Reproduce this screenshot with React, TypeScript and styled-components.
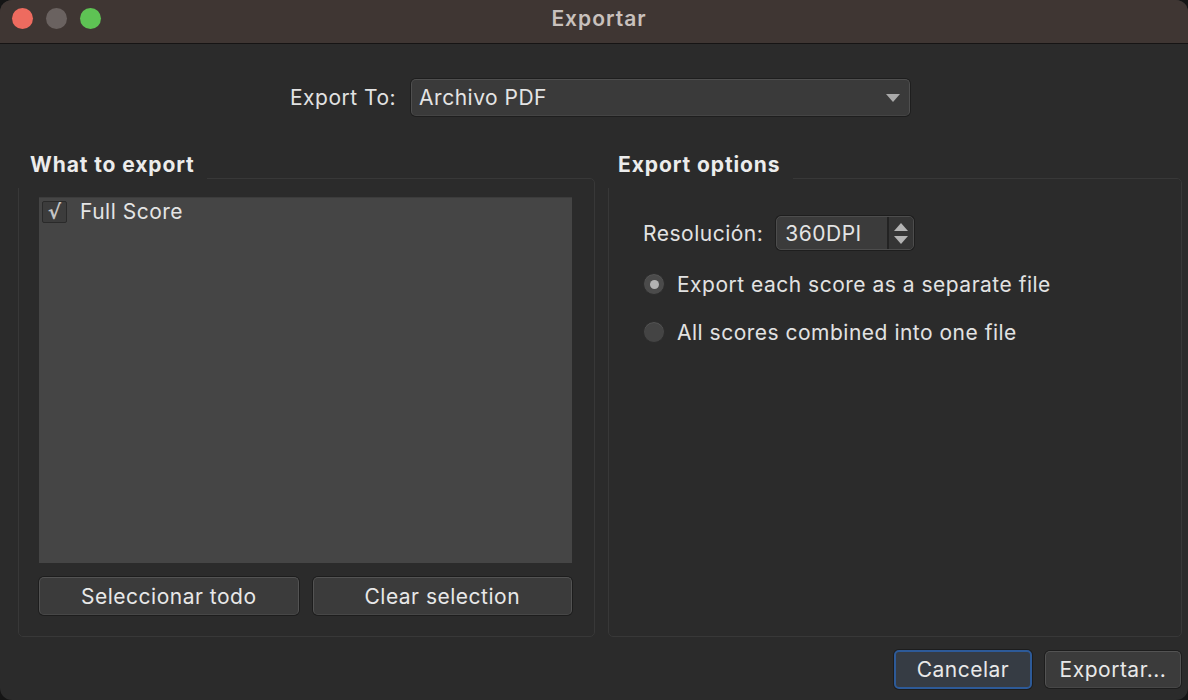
import styled, { createGlobalStyle } from "styled-components";

const GlobalStyle = createGlobalStyle`
  html, body {
    margin: 0;
    padding: 0;
    background: #151515;
  }
  body {
    font-family: Inter, "Noto Sans", "Liberation Sans", sans-serif;
    -webkit-font-smoothing: antialiased;
  }
  * {
    box-sizing: border-box;
  }
`;

const Window = styled.div`
  width: 1188px;
  height: 700px;
  display: flex;
  flex-direction: column;
  background: #2b2b2b;
  border-radius: 12px;
  overflow: hidden;
  color: #e4e4e4;
  font-size: 21px;
  letter-spacing: 0.5px;
`;

const TitleBar = styled.div`
  height: 44px;
  flex: none;
  display: grid;
  grid-template-columns: 1fr auto 1fr;
  align-items: center;
  padding: 0 12px 6px;
  background: #3f3633;
  border-bottom: 1px solid #161414;
`;

const Lights = styled.div`
  display: flex;
  gap: 13px;
`;

const Light = styled.span<{ $color: string }>`
  width: 21px;
  height: 21px;
  border-radius: 50%;
  background: ${(p) => p.$color};
`;

const WindowTitle = styled.div`
  margin-left: 10px;
  font-weight: 600;
  font-size: 21px;
  letter-spacing: 1px;
  color: #c9c1bd;
`;

const Body = styled.div`
  flex: 1;
  display: flex;
  flex-direction: column;
  padding: 35px 7px 0 18px;
`;

const ExportRow = styled.div`
  display: flex;
  align-items: center;
  gap: 15px;
  padding-left: 272px;
`;

const Label = styled.span`
  color: #e2e2e2;
  white-space: nowrap;
`;

const Combo = styled.div`
  width: 499px;
  height: 37px;
  display: flex;
  align-items: center;
  justify-content: space-between;
  padding: 0 9px 0 7px;
  background: #3a3a3a;
  border: 1px solid #4f4f4f;
  border-bottom-color: #444;
  border-radius: 5px;
  box-shadow: 0 0 0 1px #1e1e1e;
`;

const Arrow = styled.span`
  width: 0;
  height: 0;
  border-left: 7px solid transparent;
  border-right: 7px solid transparent;
  border-top: 8px solid #a9a9a9;
`;

const Groups = styled.div`
  display: grid;
  grid-template-columns: 577px 574px;
  gap: 13px;
  margin-top: 37px;
`;

const Group = styled.section`
  display: flex;
  flex-direction: column;
`;

const GroupTitle = styled.h2<{ $inset: number }>`
  position: relative;
  z-index: 1;
  align-self: flex-start;
  margin: 0 0 -10px;
  height: 35px;
  padding: 0 12px 0 ${(p) => p.$inset}px;
  line-height: 24px;
  font-size: 21px;
  font-weight: 700;
  letter-spacing: 0.9px;
  color: #ececec;
  background: #2b2b2b;
`;

const Frame = styled.div`
  height: 459px;
  display: flex;
  flex-direction: column;
  border: 1px solid #383838;
  border-radius: 5px;
`;

const LeftFrame = styled(Frame)`
  padding: 18px 22px 21px 20px;
  gap: 14px;
`;

const RightFrame = styled(Frame)`
  padding: 37px 0 0 34px;
  gap: 20px;
`;

const List = styled.div`
  flex: 1;
  background: #454545;
  border-top: 1px solid #3c3c3c;
  padding: 2px 3px;
`;

const ListItem = styled.div`
  display: flex;
  align-items: center;
  gap: 13px;
  height: 23px;
`;

const CheckBox = styled.span`
  width: 25px;
  height: 22px;
  display: flex;
  align-items: center;
  justify-content: center;
  background: #3c3c3c;
  border: 1px solid #2a2a2a;
  border-radius: 2px;
  color: #c4c4c4;
  font-family: "DejaVu Sans", sans-serif;
  font-size: 20px;
  font-weight: 700;
  line-height: 1;
  letter-spacing: 0;
`;

const ButtonRow = styled.div`
  display: grid;
  grid-template-columns: 1fr 1fr;
  gap: 14px;
`;

const Button = styled.button<{ $focused?: boolean }>`
  height: 38px;
  font-family: inherit;
  font-size: 21px;
  letter-spacing: 0.5px;
  color: #e8e8e8;
  background: ${(p) => (p.$focused ? "#363c44" : "#3b3b3b")};
  border: ${(p) => (p.$focused ? "2px solid #2d5a98" : "1px solid #535353")};
  border-bottom-color: ${(p) => (p.$focused ? "#2d5a98" : "#474747")};
  border-radius: 5px;
  box-shadow: 0 0 0 1px #1d1d1d;
  padding: 0 10px;
`;

const OptionRow = styled.div`
  display: flex;
  align-items: center;
  gap: 12px;
  height: 28px;
`;

const SpinRow = styled(OptionRow)`
  height: 34px;
  gap: 13px;
`;

const Spin = styled.div`
  width: 138px;
  height: 34px;
  display: flex;
  background: #3b3b3b;
  border: 1px solid #4d4d4d;
  border-radius: 5px;
  box-shadow: 0 0 0 1px #1e1e1e;
  overflow: hidden;
`;

const SpinValue = styled.span`
  flex: 1;
  display: flex;
  align-items: center;
  padding-left: 8px;
`;

const SpinArrows = styled.span`
  width: 26px;
  display: flex;
  flex-direction: column;
  align-items: center;
  justify-content: center;
  gap: 5px;
  background: #353535;
  border-left: 2px solid #232323;
`;

const Tri = styled.span<{ $up?: boolean }>`
  width: 0;
  height: 0;
  border-left: 7px solid transparent;
  border-right: 7px solid transparent;
  ${(p) => (p.$up ? "border-bottom: 8px solid #b4b4b4;" : "border-top: 8px solid #b4b4b4;")}
`;

const Radio = styled.span<{ $on?: boolean }>`
  width: 22px;
  height: 22px;
  display: flex;
  align-items: center;
  justify-content: center;
  border-radius: 50%;
  background: ${(p) => (p.$on ? "#4b4b4b" : "#444")};
  border: 1px solid #2c2c2c;
  box-shadow: inset 0 1px 0 #555;

  &::after {
    content: "";
    display: ${(p) => (p.$on ? "block" : "none")};
    width: 9px;
    height: 9px;
    border-radius: 50%;
    background: #b3b3b3;
  }
`;

const Footer = styled.div`
  display: flex;
  justify-content: flex-end;
  align-items: center;
  gap: 13px;
  margin-top: 13px;
`;

export default function App() {
  return (
    <>
      <GlobalStyle />
      <Window>
        <TitleBar>
          <Lights>
            <Light $color="#ee6b5f" />
            <Light $color="#6a6260" />
            <Light $color="#5ec354" />
          </Lights>
          <WindowTitle>Exportar</WindowTitle>
          <span />
        </TitleBar>
        <Body>
          <ExportRow>
            <Label>Export To:</Label>
            <Combo>
              <span>Archivo PDF</span>
              <Arrow />
            </Combo>
          </ExportRow>
          <Groups>
            <Group>
              <GroupTitle $inset={12}>What to export</GroupTitle>
              <LeftFrame>
                <List>
                  <ListItem>
                    <CheckBox>√</CheckBox>
                    <span>Full Score</span>
                  </ListItem>
                </List>
                <ButtonRow>
                  <Button>Seleccionar todo</Button>
                  <Button>Clear selection</Button>
                </ButtonRow>
              </LeftFrame>
            </Group>
            <Group>
              <GroupTitle $inset={10}>Export options</GroupTitle>
              <RightFrame>
                <SpinRow>
                  <Label>Resolución:</Label>
                  <Spin>
                    <SpinValue>360DPI</SpinValue>
                    <SpinArrows>
                      <Tri $up />
                      <Tri />
                    </SpinArrows>
                  </Spin>
                </SpinRow>
                <OptionRow>
                  <Radio $on />
                  <Label>Export each score as a separate file</Label>
                </OptionRow>
                <OptionRow>
                  <Radio />
                  <Label>All scores combined into one file</Label>
                </OptionRow>
              </RightFrame>
            </Group>
          </Groups>
          <Footer>
            <Button $focused style={{ width: 138, height: 39 }}>
              Cancelar
            </Button>
            <Button style={{ width: 136, height: 37 }}>Exportar...</Button>
          </Footer>
        </Body>
      </Window>
    </>
  );
}
